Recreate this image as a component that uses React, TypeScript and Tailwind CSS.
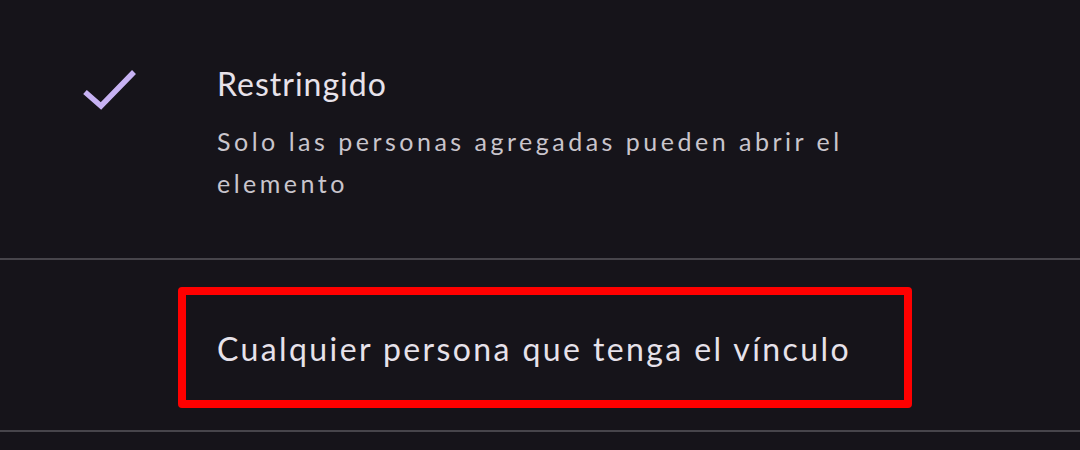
import React from "react";

export default function App() {
  return (
    <div
      className="w-[1080px] h-[450px] bg-[#16141a] overflow-hidden"
      style={{ fontFamily: "Lato, 'Noto Sans', sans-serif" }}
    >
      <div className="h-[258px] flex">
        <div className="w-[217px] shrink-0 pl-[80px] pt-[67px]">
          <svg width="58" height="44" viewBox="0 0 58 44" fill="none">
            <path
              d="M5 25 L21 39 L54 5"
              stroke="#c7b2f3"
              strokeWidth="5.5"
              strokeLinecap="butt"
              strokeLinejoin="miter"
            />
          </svg>
        </div>
        <div className="pt-[64px] w-[660px]">
          <div className="text-[32px] leading-[40px] text-[#e7e2ea] tracking-[1px]">
            Restringido
          </div>
          <div className="mt-[16px] text-[25px] leading-[42px] text-[#c9c5cc] tracking-[3.5px]">
            Solo las personas agregadas pueden abrir el elemento
          </div>
        </div>
      </div>
      <div className="h-[2px] bg-[#47454b]" />
      <div className="h-[170px] pt-[27px] pl-[178px]">
        <div className="w-[734px] h-[121px] border-[8px] border-[#ff0000] rounded-[4px] flex items-center pl-[31px] pt-[3px]">
          <span className="text-[32px] leading-[40px] text-[#e7e2ea] tracking-[2.4px]">
            Cualquier persona que tenga el vínculo
          </span>
        </div>
      </div>
      <div className="h-[2px] bg-[#47454b]" />
    </div>
  );
}
